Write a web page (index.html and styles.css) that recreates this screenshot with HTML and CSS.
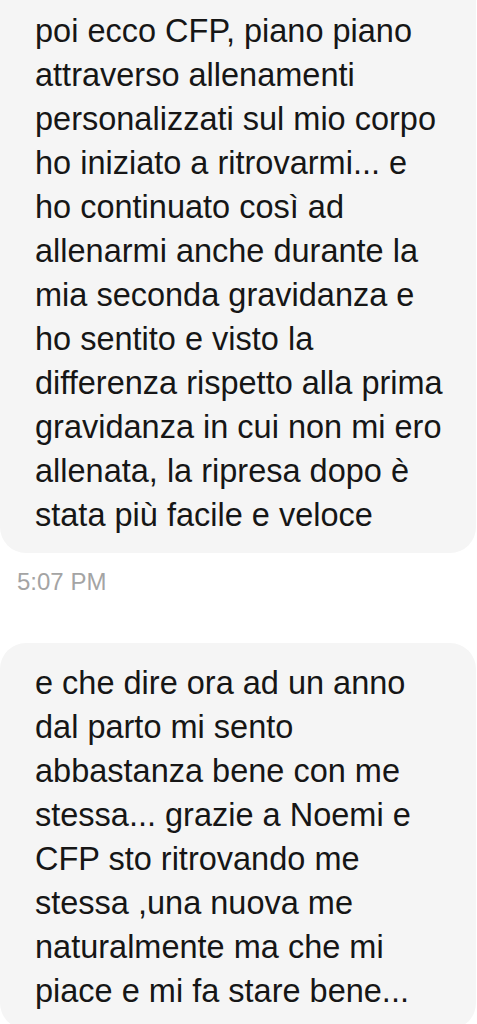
FILE: index.html
```html
<!doctype html>
<html>
    <head>
        <meta charset="UTF-8" />
        <title>Chat</title>
        <link rel="stylesheet" href="styles.css">
    </head>
    <body>
        <div class="thread">
            <div class="bubble bubble-cut">
                poi ecco CFP, piano piano attraverso allenamenti personalizzati sul mio corpo ho iniziato a ritrovarmi... e ho continuato così ad allenarmi anche durante la mia seconda gravidanza e ho sentito e visto la differenza rispetto alla prima gravidanza in cui non mi ero allenata, la ripresa dopo è stata più facile e veloce
            </div>
            <div class="time">5:07 PM</div>
            <div class="bubble">
                e che dire ora ad un anno dal parto mi sento abbastanza bene con me stessa... grazie a Noemi e CFP sto ritrovando me stessa ,una nuova me naturalmente ma che mi piace e mi fa stare bene...
            </div>
        </div>
    </body>
</html>
```
FILE: styles.css
```css
body {
    margin: 0;
    background-color: #fff;
    font-family: "Liberation Sans", Arial, sans-serif;
    overflow: hidden;
}

.thread {
    display: flex;
    flex-direction: column;
    width: 476px;
}

.bubble {
    background-color: #f5f5f5;
    color: #161616;
    font-size: 32.5px;
    line-height: 44px;
    padding: 18px 25px 16px 35px;
    border-radius: 26px;
}

.bubble-cut {
    padding-top: 9px;
    border-radius: 0 0 26px 26px;
}

.time {
    color: #a4a4a4;
    font-size: 24px;
    line-height: 28px;
    padding-left: 17px;
    margin: 15px 0 47px;
}
```
